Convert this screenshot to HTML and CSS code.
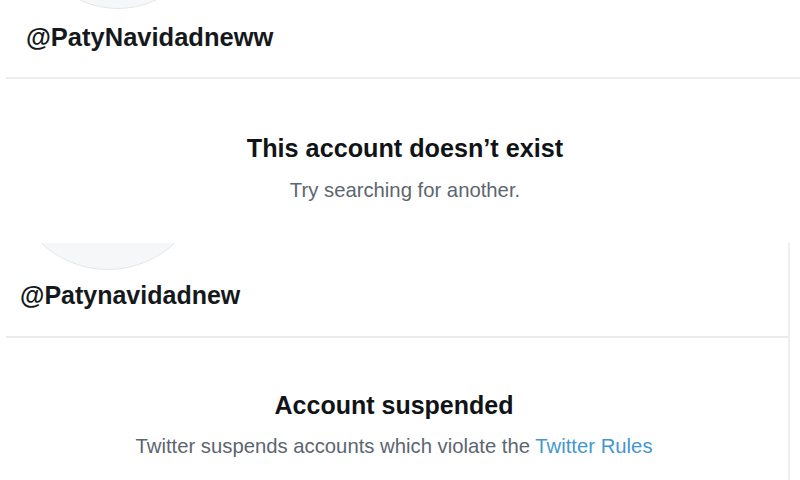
FILE: index.html
```html
<!DOCTYPE html>
<html lang="en">
<head>
<meta charset="utf-8">
<title>Accounts</title>
<link rel="stylesheet" href="styles.css">
</head>
<body>
  <section class="shot shot-one">
    <div class="avatar-clip avatar-clip-one"><div class="avatar avatar-one"></div></div>
    <div class="handle handle-one">@PatyNavidadneww</div>
    <div class="notice notice-one">
      <h2 class="notice-title">This account doesn’t exist</h2>
      <p class="notice-text">Try searching for another.</p>
    </div>
  </section>
  <section class="shot shot-two">
    <div class="avatar-clip avatar-clip-two"><div class="avatar avatar-two"></div></div>
    <div class="handle handle-two">@Patynavidadnew</div>
    <div class="notice notice-two">
      <h2 class="notice-title">Account suspended</h2>
      <p class="notice-text">Twitter suspends accounts which violate the <span class="link">Twitter Rules</span></p>
    </div>
  </section>
</body>
</html>
```
FILE: styles.css
```css
html, body {
  margin: 0;
  padding: 0;
  background: #ffffff;
}
body {
  width: 800px;
  height: 480px;
  overflow: hidden;
  font-family: "Liberation Sans", Arial, sans-serif;
  color: #0f1419;
}
.shot {
  display: flex;
  flex-direction: column;
}
.shot-one {
  height: 243px;
}
.shot-two {
  width: 788px;
  height: 237px;
  border-right: 2px solid #efefef;
}
.avatar-clip {
  overflow: hidden;
  flex: none;
}
.avatar {
  border-radius: 50%;
  background: #f5f7f8;
  border: 1px solid #e4e7ea;
  box-sizing: border-box;
}
.avatar-clip-one {
  height: 9px;
}
.avatar-one {
  width: 180px;
  height: 180px;
  margin-top: -171px;
  margin-left: 28px;
}
.avatar-clip-two {
  height: 27px;
}
.avatar-two {
  width: 196px;
  height: 196px;
  margin-top: -169px;
  margin-left: 10px;
}
.handle {
  font-weight: 700;
  font-size: 25px;
  line-height: 30px;
  color: #16191c;
  border-bottom: 2px solid #ececec;
  margin-left: 6px;
}
.handle-one {
  font-size: 25.5px;
  margin-top: 13px;
  padding: 0 0 25px 20px;
}
.handle-two {
  margin-top: 10px;
  padding: 0 0 26px 14px;
}
.notice {
  display: flex;
  flex-direction: column;
  align-items: center;
}
.notice-one {
  margin-top: 54px;
  padding-left: 10px;
}
.notice-two {
  margin-top: 52px;
}
.notice-title {
  margin: 0;
  font-size: 25px;
  line-height: 30px;
  font-weight: 700;
  color: #111417;
}
.notice-one .notice-title {
  font-size: 25.2px;
}
.notice-text {
  margin: 15px 0 0;
  font-size: 20.3px;
  line-height: 24px;
  color: #5b6670;
}
.notice-two .notice-text {
  margin-top: 14px;
}
.link {
  color: #4497cf;
}
```
